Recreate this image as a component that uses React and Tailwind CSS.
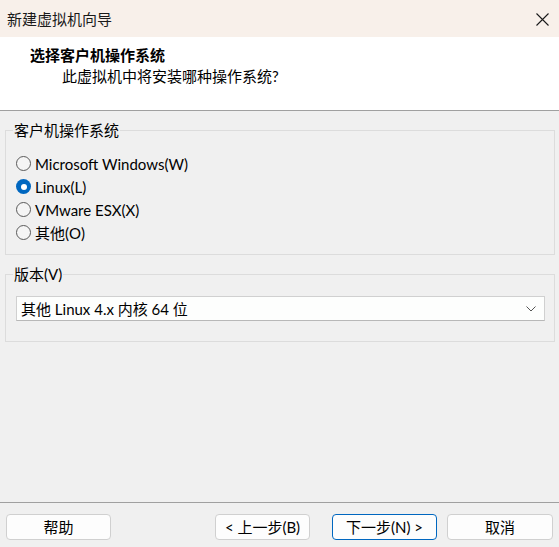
import React from "react";

const font = { fontFamily: 'Lato, "Noto Sans CJK SC", "Noto Sans", sans-serif' };

function Radio({ checked, label }) {
  return (
    <div className="flex h-[23px] items-center">
      {checked ? (
        <span className="flex h-[15px] w-[15px] items-center justify-center rounded-full bg-[#0067c0]">
          <span className="h-[6px] w-[6px] rounded-full bg-white" />
        </span>
      ) : (
        <span className="h-[15px] w-[15px] rounded-full border border-[#5a5a5a] bg-[#f5f5f5]" />
      )}
      <span className="ml-[4px] text-[15px] leading-[20px] text-black">{label}</span>
    </div>
  );
}

function Btn({ children, w, primary }) {
  return (
    <button
      className={
        "flex h-[26px] items-center justify-center rounded-[4px] bg-[#fdfdfd] text-[15px] leading-[20px] text-black " +
        w +
        (primary ? " border border-[#0067c0]" : " border border-[#d0d0d0]")
      }
    >
      {children}
    </button>
  );
}

export default function App() {
  return (
    <div style={font} className="flex h-[547px] w-[559px] flex-col bg-[#f0f0f0]">
      <div className="flex h-[37px] shrink-0 items-center justify-between bg-[#f8f0ea] pl-[7px] pr-[10px]">
        <span className="text-[15px] leading-[20px] text-[#1a1a1a]">新建虚拟机向导</span>
        <svg width="13" height="13" viewBox="0 0 13 13" className="mt-[1px]">
          <path d="M0.5 0.5 L12.5 12.5 M12.5 0.5 L0.5 12.5" stroke="#1a1a1a" strokeWidth="1.1" fill="none" />
        </svg>
      </div>
      <div className="flex h-[74px] shrink-0 flex-col border-b border-[#a0a0a0] bg-white pt-[8px]">
        <div className="pl-[30px] text-[15px] font-bold leading-[21px] text-black">选择客户机操作系统</div>
        <div className="pl-[62px] text-[15px] leading-[21px] text-black">此虚拟机中将安装哪种操作系统?</div>
      </div>
      <div className="flex flex-1 flex-col">
        <fieldset className="ml-[5px] mr-[4px] mt-[9px] border border-[#dcdcdc] pb-[10px] pl-[10px]">
          <legend className="-ml-[3px] px-[1px] text-[15px] leading-[20px] text-black">客户机操作系统</legend>
          <div className="pt-[12px]">
            <Radio label="Microsoft Windows(W)" />
            <Radio checked label="Linux(L)" />
            <Radio label="VMware ESX(X)" />
            <Radio label="其他(O)" />
          </div>
        </fieldset>
        <fieldset className="ml-[5px] mr-[4px] mt-[9px] border border-[#dcdcdc] pb-[20px] pl-[10px] pr-[9px]">
          <legend className="-ml-[3px] px-[1px] text-[15px] leading-[20px] text-black">版本(V)</legend>
          <div className="mt-[12px] flex h-[25px] items-center justify-between border border-[#d0d0d0] border-b-[#b8b8b8] bg-[#fdfefd] pl-[4px] pr-[8px]">
            <span className="text-[15px] leading-[20px] text-black">其他 Linux 4.x 内核 64 位</span>
            <svg width="10" height="6" viewBox="0 0 10 6">
              <path d="M0.5 0.5 L5 5 L9.5 0.5" stroke="#555" strokeWidth="1" fill="none" />
            </svg>
          </div>
        </fieldset>
      </div>
      <div className="flex h-[45px] shrink-0 items-start border-t border-[#a0a0a0] pt-[11px]">
        <div className="ml-[6px]">
          <Btn w="w-[105px]">帮助</Btn>
        </div>
        <div className="ml-auto flex">
          <Btn w="w-[95px]">&lt; 上一步(B)</Btn>
          <div className="ml-[22px]">
            <Btn w="w-[105px]" primary>
              下一步(N) &gt;
            </Btn>
          </div>
          <div className="ml-[10px] mr-[6px]">
            <Btn w="w-[106px]">取消</Btn>
          </div>
        </div>
      </div>
    </div>
  );
}
